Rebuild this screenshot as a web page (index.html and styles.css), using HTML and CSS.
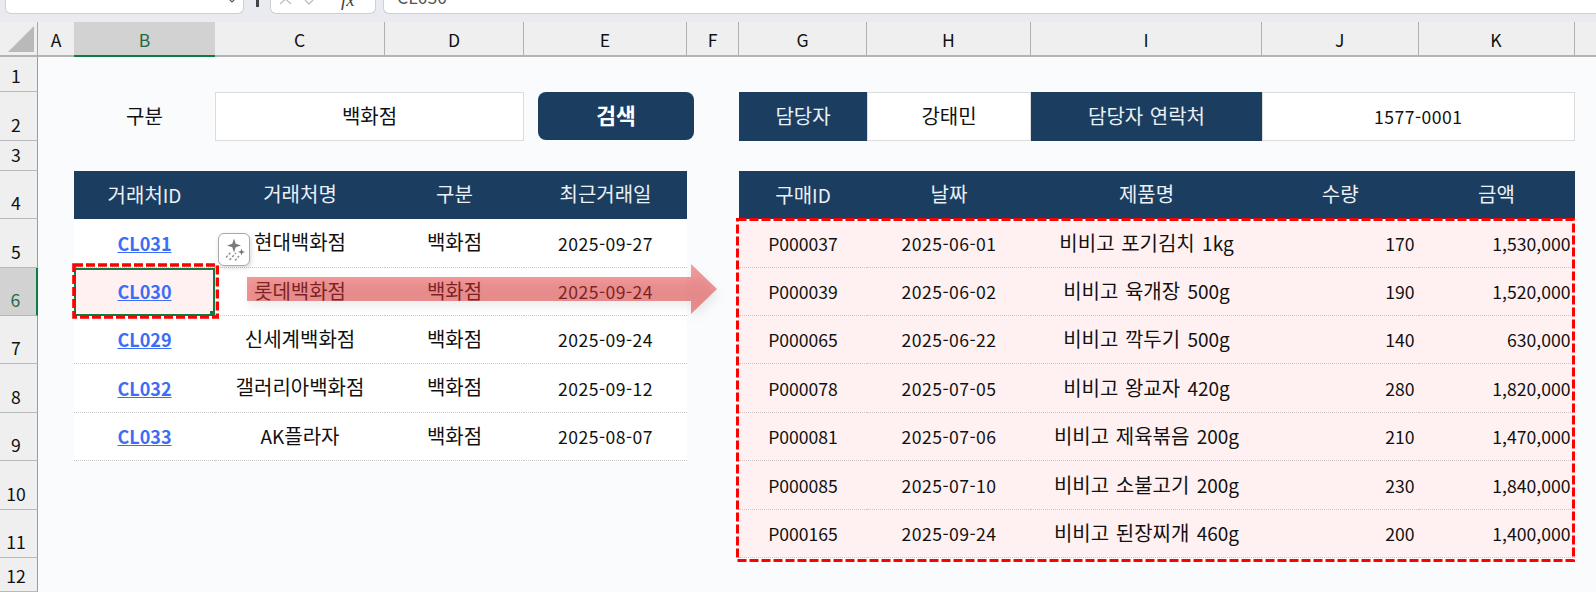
FILE: index.html
```html
<!DOCTYPE html>
<html lang="ko">
<head>
<meta charset="utf-8">
<title>거래처 조회</title>
<link rel="stylesheet" href="styles.css">
</head>
<body>
<div class="app">
  <div class="formula">
    <div class="fbox namebox"><svg class="caret" width="10" height="6" viewBox="0 0 10 6"><path d="M1 0 5 4 9 0" fill="none" stroke="#555" stroke-width="1.2"/></svg></div>
    <div class="grip"><i></i></div>
    <div class="fbox tools">
      <svg width="16" height="6" viewBox="0 0 16 6"><path d="M1-6 12 4M12-6 1 4" fill="none" stroke="#bdbdbd" stroke-width="1.3"/></svg>
      <svg width="16" height="6" viewBox="0 0 16 6"><path d="M4 0 8 4 16-4" fill="none" stroke="#bdbdbd" stroke-width="1.3"/></svg>
      <span class="fx">fx</span>
    </div>
    <div class="fbox input"><span>CL030</span></div>
  </div>

  <div class="row colhead">
    <div class="corner"><svg width="38" height="35" viewBox="0 0 38 35"><path d="M34 5V31H8Z" fill="#b9b9b9"/></svg></div>
    <div class="ch">A</div><div class="ch on">B</div><div class="ch">C</div><div class="ch">D</div><div class="ch">E</div><div class="ch">F</div><div class="ch">G</div><div class="ch">H</div><div class="ch">I</div><div class="ch">J</div><div class="ch">K</div><div class="ch last"></div>
  </div>

  <div class="sheet">
    <div class="row h35"><div class="rh">1</div></div>

    <div class="row h49">
      <div class="rh">2</div><div></div>
      <div class="cell k">구분</div>
      <div class="cell field k s2">백화점</div>
      <div class="btnwrap s2"><button class="btn">검색</button></div>
      <div class="cell navy k">담당자</div>
      <div class="cell field k">강태민</div>
      <div class="cell navy k">담당자 연락처</div>
      <div class="cell field date s2">1577-0001</div>
    </div>

    <div class="row h30"><div class="rh">3</div></div>

    <div class="row h48">
      <div class="rh">4</div><div></div>
      <div class="cell navy mix"><span class="k">거래처</span>ID</div>
      <div class="cell navy k">거래처명</div>
      <div class="cell navy k">구분</div>
      <div class="cell navy k">최근거래일</div>
      <div></div>
      <div class="cell navy mix"><span class="k">구매</span>ID</div>
      <div class="cell navy k">날짜</div>
      <div class="cell navy k">제품명</div>
      <div class="cell navy k">수량</div>
      <div class="cell navy k">금액</div>
    </div>

    <div class="row h49">
      <div class="rh">5</div><div></div>
      <div class="cell w"><a class="link">CL031</a></div>
      <div class="cell w k">현대백화점</div>
      <div class="cell w k">백화점</div>
      <div class="cell w date">2025-09-27</div>
      <div></div>
      <div class="cell p">P000037</div>
      <div class="cell p date">2025-06-01</div>
      <div class="cell p mix"><span class="k">비비고 포기김치</span>&nbsp;1kg</div>
      <div class="cell p num">170</div>
      <div class="cell p num">1,530,000</div>
    </div>

    <div class="row h48">
      <div class="rh on">6</div><div></div>
      <div class="cell p sel"><a class="link">CL030</a><i class="handle"></i></div>
      <div class="cell w k">롯데백화점</div>
      <div class="cell w k">백화점</div>
      <div class="cell w date">2025-09-24</div>
      <div></div>
      <div class="cell p">P000039</div>
      <div class="cell p date">2025-06-02</div>
      <div class="cell p mix"><span class="k">비비고 육개장</span>&nbsp;500g</div>
      <div class="cell p num">190</div>
      <div class="cell p num">1,520,000</div>
    </div>

    <div class="row h48">
      <div class="rh">7</div><div></div>
      <div class="cell w"><a class="link">CL029</a></div>
      <div class="cell w k">신세계백화점</div>
      <div class="cell w k">백화점</div>
      <div class="cell w date">2025-09-24</div>
      <div></div>
      <div class="cell p">P000065</div>
      <div class="cell p date">2025-06-22</div>
      <div class="cell p mix"><span class="k">비비고 깍두기</span>&nbsp;500g</div>
      <div class="cell p num">140</div>
      <div class="cell p num">630,000</div>
    </div>

    <div class="row h49">
      <div class="rh">8</div><div></div>
      <div class="cell w"><a class="link">CL032</a></div>
      <div class="cell w k">갤러리아백화점</div>
      <div class="cell w k">백화점</div>
      <div class="cell w date">2025-09-12</div>
      <div></div>
      <div class="cell p">P000078</div>
      <div class="cell p date">2025-07-05</div>
      <div class="cell p mix"><span class="k">비비고 왕교자</span>&nbsp;420g</div>
      <div class="cell p num">280</div>
      <div class="cell p num">1,820,000</div>
    </div>

    <div class="row h48">
      <div class="rh">9</div><div></div>
      <div class="cell w"><a class="link">CL033</a></div>
      <div class="cell w mix">AK<span class="k">플라자</span></div>
      <div class="cell w k">백화점</div>
      <div class="cell w date">2025-08-07</div>
      <div></div>
      <div class="cell p">P000081</div>
      <div class="cell p date">2025-07-06</div>
      <div class="cell p mix"><span class="k">비비고 제육볶음</span>&nbsp;200g</div>
      <div class="cell p num">210</div>
      <div class="cell p num">1,470,000</div>
    </div>

    <div class="row h49">
      <div class="rh">10</div><div></div><div></div><div></div><div></div><div></div><div></div>
      <div class="cell p">P000085</div>
      <div class="cell p date">2025-07-10</div>
      <div class="cell p mix"><span class="k">비비고 소불고기</span>&nbsp;200g</div>
      <div class="cell p num">230</div>
      <div class="cell p num">1,840,000</div>
    </div>

    <div class="row h48">
      <div class="rh">11</div><div></div><div></div><div></div><div></div><div></div><div></div>
      <div class="cell p">P000165</div>
      <div class="cell p date">2025-09-24</div>
      <div class="cell p mix"><span class="k">비비고 된장찌개</span>&nbsp;460g</div>
      <div class="cell p num">200</div>
      <div class="cell p num">1,400,000</div>
    </div>

    <div class="row h34"><div class="rh">12</div></div>
  </div>

  <svg class="over dash-a" width="147" height="56" viewBox="0 0 147 56"><rect x="2" y="2" width="143.5" height="52" fill="none" stroke="#f00" stroke-width="3.6" stroke-dasharray="9 3"/></svg>
  <svg class="over dash-b" width="840" height="344" viewBox="0 0 840 344"><rect x="1.5" y="1.5" width="836" height="341" fill="none" stroke="#f00" stroke-width="3" stroke-dasharray="9 3"/></svg>

  <svg class="over arrow" width="490" height="70" viewBox="0 0 490 70">
    <defs>
      <linearGradient id="shaft" x1="0" y1="0" x2="0" y2="1">
        <stop offset="0" stop-color="#ee4444"/>
        <stop offset=".45" stop-color="#e23434"/>
        <stop offset="1" stop-color="#dc3030"/>
      </linearGradient>
    </defs>
    <path d="M0 18H444V5L470 30 444 55V42H0Z" fill="url(#shaft)" fill-opacity=".52"/>
  </svg>

  <div class="over spark">
    <svg width="30" height="31" viewBox="0 0 30 31">
      <path d="M15 4.5 16.7 9.8 22 11.5 16.7 13.2 15 18.5 13.3 13.2 8 11.5 13.3 9.8Z" fill="#7a7a7a"/>
      <path d="M22.5 14.5 23.4 17.1 26 18 23.4 18.9 22.5 21.5 21.6 18.9 19 18 21.6 17.1Z" fill="#7a7a7a"/>
      <path d="M7 23.5 12 18M10.5 26 17 19M16 26.5 20 22" stroke="#8e8e8e" stroke-width="1.4" stroke-dasharray="2.5 1.5" fill="none"/>
    </svg>
  </div>
</div>
</body>
</html>
```

FILE: styles.css
```css
:root {
  --cols: 38px 36px 141px 170px 139px 163px 52px 128px 164px 231px 156.5px 156px 1fr;
  --navy: #1b3e60;
  --pink: #fff1f1;
}
* { box-sizing: border-box; }
html, body { margin: 0; height: 100%; overflow: hidden; }
body { font-family: "Noto Sans CJK KR", "Noto Sans", sans-serif; font-size: 17.6px; color: #111; }
.app { position: relative; width: 1596px; height: 592px; overflow: hidden; background: #fafbfd; }

.formula { height: 22px; display: flex; padding-left: 5px; background: #eaebf0; }
.fbox { height: 14px; background: #fff; border: 1px solid #d0d0d0; border-top: 0; border-radius: 0 0 6px 6px; overflow: hidden; display: flex; align-items: flex-end; }
.namebox { width: 239px; justify-content: flex-end; padding: 0 6px 9px 0; }
.caret { display: block; }
.grip { width: 26px; height: 14px; display: flex; justify-content: center; }
.grip i { width: 3px; height: 7px; background: #444; display: block; }
.tools { width: 106px; padding: 0 0 7px 8px; gap: 6px; }
.tools svg { display: block; }
.fx { font: italic 19px/14px "Liberation Serif", serif; margin: 0 0 -1px 18px; color: #444; }
.input { flex: 1; margin-left: 7px; border-right: 0; border-radius: 0 0 0 6px; padding: 0 0 9px 13px; font-size: 17.6px; line-height: 14px; color: #555; }

.row { display: grid; grid-template-columns: var(--cols); }
.h30 { height: 30px; } .h34 { height: 34px; } .h35 { height: 35px; } .h48 { height: 48px; } .h49 { height: 49px; }

.colhead { height: 35px; background: #efefef; border-bottom: 2px solid #b4b4b4; }
.corner { border-right: 1px solid #a6a6a6; height: 34px; }
.corner svg { display: block; margin-top: -1px; }
.ch { display: flex; align-items: center; justify-content: center; height: 33px; border-right: 1px solid #b0b0b0; padding-top: 1px; }
.ch:nth-child(2) { border-right: 0; }
.ch.on { background: #d2d2d2; color: #1f6b45; height: 35px; border-bottom: 2px solid #107c41; border-right: 0; }
.ch.last { border-right: 0; }

.rh { background: #efefef; border-right: 1px solid #9c9c9c; border-bottom: 1px solid #b9b9b9; display: flex; align-items: flex-end; justify-content: center; padding: 0 5px 4px 0; line-height: 22px; }
.rh.on { background: #d2d2d2; color: #1f6b45; border-right: 2px solid #107c41; }

.cell { display: flex; align-items: center; justify-content: center; white-space: pre; min-width: 0; }
.k { font-size: 20px; word-spacing: 1px; }
.cell.k { padding-bottom: 3px; }
.mix { font-size: 19px; padding-bottom: 2px; word-spacing: 2px; }
.s2 { grid-column: span 2; }
.navy { background: var(--navy); color: #eaf0f6; }
.field { background: #fff; border: 1px solid #dcdcdc; }
.w { background: #fff; border-bottom: 1px dotted #c8c8c8; }
.p { background: var(--pink); border-bottom: 1px dotted #d0c4c4; }
.num { justify-content: flex-end; padding-right: 4px; }
.date { letter-spacing: .45px; }
.sel { border: 2px solid #107c41; position: relative; padding-bottom: 2px; }
.handle { position: absolute; right: -2px; bottom: -2px; width: 5px; height: 5px; background: #107c41; }
.link { color: #3b6ef5; font-weight: 700; font-size: 18px; text-decoration: underline; padding-bottom: 1px; }

.btnwrap { padding: 0 45px 1px 14px; }
.btn { width: 156px; height: 48px; border: 0; border-radius: 8px; background: var(--navy); color: #fff; font: 700 21.5px "Noto Sans CJK KR", sans-serif; padding: 0 0 3px; }

.over { position: absolute; display: block; }
.dash-a { left: 72px; top: 263px; }
.dash-b { left: 736px; top: 218px; }
.arrow { left: 247px; top: 259px; filter: drop-shadow(2px 5px 5px rgba(0,0,0,.14)); }
.spark { left: 218px; top: 233px; width: 32px; height: 33px; background: #fff; border: 1px solid #a9a9a9; border-radius: 6px; box-shadow: 1px 2px 5px rgba(0,0,0,.15); }
.spark svg { display: block; }
```
